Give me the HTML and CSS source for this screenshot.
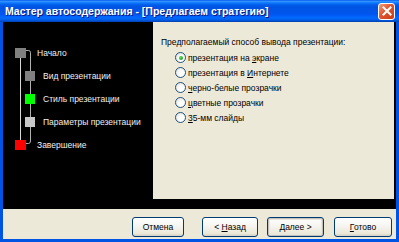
FILE: index.html
```html
<!DOCTYPE html>
<html lang="ru">

<head>
    <meta charset="UTF-8">
    <title>Мастер автосодержания</title>
    <link rel="stylesheet" href="styles.css">
</head>

<body>

    <div class="window">

        <!-- Title bar -->
        <div class="titlebar">
            <span class="title">Мастер автосодержания - [Предлагаем стратегию]</span>
            <button class="close" aria-label="Закрыть">
                <svg width="10" height="10" viewBox="0 0 10 10">
                    <path d="M1.5 1.5 L8.5 8.5 M8.5 1.5 L1.5 8.5" stroke="#fff" stroke-width="2" stroke-linecap="square"/>
                </svg>
            </button>
        </div>

        <div class="client">
            <div class="stage">

                <!-- Wizard steps -->
                <div class="steps">
                    <svg class="tree-lines" width="150" height="177" viewBox="0 0 150 177">
                        <path d="M17.5 34 V118" stroke="#d8d8d8" stroke-width="1" fill="none"/>
                        <path d="M23 28.5 H25.5 Q27.5 28.5 27.5 30.5 V119 Q27.5 121.5 25.5 121.5 H23" stroke="#b0b0b0" stroke-width="1" fill="none"/>
                    </svg>
                    <ul class="step-list">
                        <li class="step top"><span class="box grey"></span><span>Начало</span></li>
                        <li class="step sub"><span class="box grey"></span><span>Вид презентации</span></li>
                        <li class="step sub"><span class="box green"></span><span>Стиль презентации</span></li>
                        <li class="step sub"><span class="box light"></span><span>Параметры презентации</span></li>
                        <li class="step top"><span class="box red"></span><span>Завершение</span></li>
                    </ul>
                </div>

                <!-- Question panel -->
                <div class="panel">
                    <p class="question">Предполагаемый способ вывода презентации:</p>
                    <div class="options">
                        <label class="option"><span class="radio checked"></span><span>презентация на <u>э</u>кране</span></label>
                        <label class="option"><span class="radio"></span><span>презентация в <u>И</u>нтернете</span></label>
                        <label class="option"><span class="radio"></span><span><u>ч</u>ерно-белые прозрачки</span></label>
                        <label class="option"><span class="radio"></span><span><u>ц</u>ветные прозрачки</span></label>
                        <label class="option"><span class="radio"></span><span><u>3</u>5-мм слайды</span></label>
                    </div>
                </div>
            </div>

            <!-- Buttons -->
            <div class="footer">
                <button class="btn cancel">Отмена</button>
                <button class="btn back">&lt; <u>Н</u>азад</button>
                <button class="btn next default"><u>Д</u>алее &gt;</button>
                <button class="btn finish"><u>Г</u>отово</button>
            </div>
        </div>

    </div>

</body>

</html>
```

FILE: styles.css
```css
/* Basic Reset */
body {
    margin: 0;
    padding: 0;
    overflow: hidden;
    font-family: 'Liberation Sans', Arial, sans-serif;
    font-size: 8.5px;
}

/* Window frame */
.window {
    width: 399px;
    height: 242px;
    display: flex;
    flex-direction: column;
    background: #0054e3;
}

/* Title bar */
.titlebar {
    height: 22px;
    display: flex;
    align-items: center;
    justify-content: space-between;
    padding: 0 4px 0 5px;
    background: linear-gradient(#0058ee 0%, #3593ff 6%, #127dff 12%, #0262ee 20%, #0054e3 30%, #0055eb 60%, #005bf5 70%, #026afe 80%, #0062ef 88%, #0052d6 94%, #0040ab 100%);
}

.title {
    color: #fff;
    font-weight: bold;
    font-size: 10.5px;
    text-shadow: 1px 1px #0a1883;
    white-space: nowrap;
}

.close {
    width: 17px;
    height: 17px;
    padding: 0;
    border: 1px solid #fff;
    border-radius: 3px;
    background: linear-gradient(135deg, #f29c7d 0%, #e2552f 45%, #c73d14 100%);
    display: flex;
    justify-content: center;
    align-items: center;
}

/* Client area */
.client {
    flex: 1;
    display: flex;
    flex-direction: column;
    margin: 0 3px 3px;
    background: #ece9d8;
}

.stage {
    display: flex;
    background: #000;
    padding: 0 2px 10px 0;
}

/* Steps tree */
.steps {
    width: 150px;
    position: relative;
}

.tree-lines {
    position: absolute;
    top: 0;
    left: 0;
}

.step-list {
    position: relative;
    list-style: none;
    margin: 0;
    padding: 19px 0 0 0;
}

.step {
    height: 23px;
    display: flex;
    align-items: center;
    color: #f0f0f0;
    white-space: nowrap;
}

.step.top {
    padding-left: 12px;
}

.step.top .box {
    width: 11px;
    height: 10px;
    margin-right: 11px;
}

.step.sub {
    padding-left: 22px;
}

.step.sub .box {
    width: 10px;
    height: 10px;
    margin-right: 8px;
}

.box {
    display: inline-block;
    flex-shrink: 0;
}

.box.grey { background: #808080; }
.box.green { background: #00ff00; }
.box.light { background: #c8c8c8; }
.box.red { background: #ff0000; }

/* Question panel */
.panel {
    flex: 1;
    height: 177px;
    background: #ece9d8;
    padding: 13px 0 0 8px;
    box-sizing: border-box;
}

.question {
    margin: 0;
    line-height: 15px;
    color: #000;
}

.options {
    display: flex;
    flex-direction: column;
    padding-left: 14px;
}

.option {
    display: flex;
    align-items: center;
    height: 15px;
    color: #000;
    white-space: nowrap;
}

.radio {
    width: 9px;
    height: 9px;
    border: 1px solid #1c5180;
    border-radius: 50%;
    background: radial-gradient(circle at 65% 65%, #fff 30%, #dcdad0 100%);
    margin-right: 2px;
    display: flex;
    justify-content: center;
    align-items: center;
    flex-shrink: 0;
}

.radio.checked::after {
    content: "";
    width: 4px;
    height: 4px;
    border-radius: 50%;
    background: radial-gradient(circle at 35% 35%, #5ce25c 0%, #21a121 70%);
}

/* Footer buttons */
.footer {
    flex: 1;
    display: flex;
    align-items: flex-start;
    justify-content: flex-end;
    padding: 8px 4px 0 0;
}

.btn {
    height: 20px;
    padding: 0;
    font-family: 'Liberation Sans', Arial, sans-serif;
    font-size: 8.5px;
    color: #000;
    border: 1px solid #003c74;
    border-radius: 3px;
    background: linear-gradient(#ffffff 0%, #f4f3ee 50%, #ece9d8 85%, #d6d0c5 100%);
}

.btn.cancel {
    width: 52px;
    margin-right: 18px;
}

.btn.back {
    width: 56px;
    margin-right: 9px;
}

.btn.next {
    width: 57px;
    margin-right: 10px;
}

.btn.finish {
    width: 58px;
}

.btn.default {
    box-shadow: inset 0 0 0 1px #c1c0bb, inset 0 0 0 2px #e8e6df;
}
```
